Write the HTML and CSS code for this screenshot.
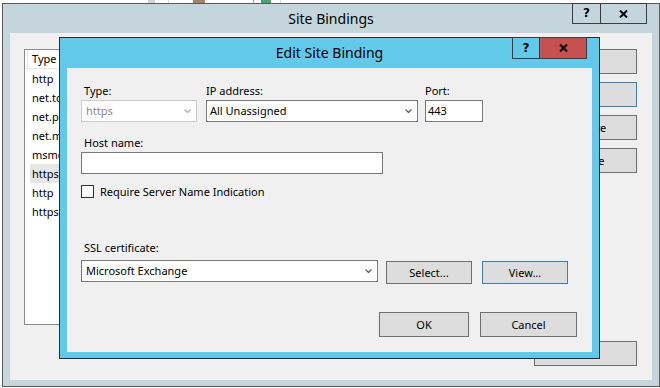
FILE: index.html
```html
<!DOCTYPE html>
<html lang="en">
<head>
    <meta charset="UTF-8">
    <title>Edit Site Binding</title>
    <link rel="stylesheet" href="styles.css">
</head>
<body>
    <div class="desktop">
        <!-- bits of whatever sits behind the windows -->
        <div class="desk-strip">
            <span class="bit bit-gray"></span>
            <span class="bit bit-line"></span>
            <span class="bit bit-photo"></span>
            <span class="bit bit-line dark"></span>
            <span class="bit bit-icon"></span>
            <span class="bit bit-line"></span>
        </div>

        <div class="window bindings">
            <div class="titlebar">
                Site Bindings
                <div class="caption-btns">
                    <span class="cap cap-help">?</span>
                    <span class="cap cap-close">
                        <svg width="9" height="8" viewBox="0 0 9 8"><path d="M1 0.5 L8 7.5 M8 0.5 L1 7.5" stroke="#000" stroke-width="2"/></svg>
                    </span>
                </div>
            </div>
            <div class="client bindings-client">
                <div class="list">
                    <div class="list-head">Type</div>
                    <div class="list-row">http</div>
                    <div class="list-row">net.tcp</div>
                    <div class="list-row">net.pipe</div>
                    <div class="list-row">net.msmq</div>
                    <div class="list-row">msmq.formatname</div>
                    <div class="list-row selected">https</div>
                    <div class="list-row">http</div>
                    <div class="list-row">https</div>
                </div>
                <div class="side-btns">
                    <button class="btn side">Add...</button>
                    <button class="btn side focused">Edit...</button>
                    <button class="btn side">Remove</button>
                    <button class="btn side">Browse</button>
                    <button class="btn side close">Close</button>
                </div>
            </div>
        </div>

        <div class="window edit-dialog">
            <div class="titlebar">
                Edit Site Binding
                <div class="caption-btns">
                    <span class="cap cap-help">?</span>
                    <span class="cap cap-close red">
                        <svg width="9" height="8" viewBox="0 0 9 8"><path d="M1 0.5 L8 7.5 M8 0.5 L1 7.5" stroke="#000" stroke-width="2"/></svg>
                    </span>
                </div>
            </div>
            <div class="client edit-client">
                <div class="row-top">
                    <div class="field type-field">
                        <div class="lbl indent">Type:</div>
                        <div class="combo disabled">
                            <span>https</span>
                            <svg width="7" height="4" viewBox="0 0 7 4"><path d="M0.5 0.5 L3.5 3.5 L6.5 0.5" fill="none" stroke="#b0b0b0" stroke-width="1.3"/></svg>
                        </div>
                    </div>
                    <div class="field ip-field">
                        <div class="lbl">IP address:</div>
                        <div class="combo">
                            <span>All Unassigned</span>
                            <svg width="7" height="4" viewBox="0 0 7 4"><path d="M0.5 0.5 L3.5 3.5 L6.5 0.5" fill="none" stroke="#606060" stroke-width="1.3"/></svg>
                        </div>
                    </div>
                    <div class="field port-field">
                        <div class="lbl">Port:</div>
                        <div class="textbox">443</div>
                    </div>
                </div>

                <div class="lbl indent host-lbl">Host name:</div>
                <div class="textbox host-box"></div>

                <div class="check-row">
                    <span class="check"></span>
                    <span>Require Server Name Indication</span>
                </div>

                <div class="lbl indent ssl-lbl">SSL certificate:</div>
                <div class="ssl-row">
                    <div class="combo ssl-combo">
                        <span>Microsoft Exchange</span>
                        <svg width="7" height="4" viewBox="0 0 7 4"><path d="M0.5 0.5 L3.5 3.5 L6.5 0.5" fill="none" stroke="#606060" stroke-width="1.3"/></svg>
                    </div>
                    <button class="btn cert-btn">Select...</button>
                    <button class="btn cert-btn focused view-btn">View...</button>
                </div>

                <div class="action-row">
                    <button class="btn ok-btn">OK</button>
                    <button class="btn cancel-btn">Cancel</button>
                </div>
            </div>
        </div>
    </div>
</body>
</html>
```

FILE: styles.css
```css
body {
    margin: 0;
    background-color: #ffffff;
    font-family: 'Noto Sans', 'Open Sans', sans-serif;
    font-size: 11px;
    line-height: 15px;
    color: #000;
}

.desktop {
    position: relative;
    width: 660px;
    height: 388px;
    overflow: hidden;
}

/* tiny strip of desktop showing above the back window */
.desk-strip {
    display: flex;
    height: 3px;
    padding-left: 148px;
}

.bit {
    height: 3px;
}

.bit-gray {
    width: 7px;
    background-color: #d4d4d4;
    margin-right: 13px;
}

.bit-line {
    width: 1px;
    background-color: #dcdcdc;
    margin-right: 24px;
}

.bit-line.dark {
    background-color: #9a9a9a;
    margin-right: 7px;
}

.bit-photo {
    width: 12px;
    background-color: #a58466;
    margin-right: 48px;
}

.bit-icon {
    width: 10px;
    background-color: #4aa36a;
    margin-right: 9px;
}

/* windows */
.window {
    position: absolute;
    display: flex;
    flex-direction: column;
    box-sizing: border-box;
}

.titlebar {
    position: relative;
    text-align: center;
    font-size: 14px;
}

.caption-btns {
    position: absolute;
    top: -1px;
    right: 5px;
    display: flex;
}

.cap {
    display: flex;
    align-items: center;
    justify-content: center;
    box-sizing: border-box;
    border: 1px solid #3c3c3c;
    font-family: 'DejaVu Sans', sans-serif;
    font-weight: bold;
    font-size: 12px;
}

.cap-close {
    border-left: none;
}

.cap-close.red {
    background-color: #c75050;
}

.client {
    flex: 1;
    background-color: #f0f0f0;
}

/* Site Bindings (back window) */
.bindings {
    left: 2px;
    top: 3px;
    width: 658px;
    height: 384px;
    border: 1px solid #5a5a5a;
    background-color: #c4d6db;
    padding: 0 7px 6px 7px;
}

.bindings .titlebar {
    height: 29px;
    line-height: 29px;
}

.bindings .cap {
    height: 21px;
}

.bindings .cap-help {
    width: 29px;
}

.bindings .cap-close {
    width: 46px;
}

.bindings-client {
    display: flex;
    gap: 14px;
    padding: 16px 15px 14px 14px;
}

.list {
    width: 496px;
    height: 276px;
    box-sizing: border-box;
    border: 1px solid #8c8c8c;
    background-color: #fff;
}

.list-head {
    height: 19px;
    box-sizing: border-box;
    margin-left: 2px;
    padding-left: 4px;
    border: 1px solid #e5e5e5;
    border-top: none;
    line-height: 18px;
}

.list-row {
    height: 19px;
    line-height: 19px;
    margin-left: 5px;
    padding-left: 2px;
}

.list-row.selected {
    background-color: #e6e6e6;
}

.side-btns {
    display: flex;
    flex-direction: column;
    gap: 8px;
}

.btn {
    box-sizing: border-box;
    border: 1px solid #707070;
    background-color: #dddddd;
    font-family: 'Noto Sans', 'Open Sans', sans-serif;
    font-size: 11px;
    color: #000;
    padding: 0;
}

.btn.focused {
    border-color: #3c7fb1;
}

.btn.side {
    width: 103px;
    height: 25px;
}

.btn.side.close {
    margin-top: auto;
}

/* Edit Site Binding dialog */
.edit-dialog {
    left: 59px;
    top: 37px;
    width: 541px;
    height: 322px;
    border: 1px solid #2b2b2b;
    background-color: #63c9ea;
    padding: 0 7px 6px 7px;
}

.edit-dialog .titlebar {
    height: 30px;
    line-height: 30px;
}

.edit-dialog .cap {
    height: 22px;
}

.edit-dialog .cap-help {
    width: 28px;
}

.edit-dialog .cap-close {
    width: 47px;
}

.edit-client {
    padding: 15px 15px 0 14px;
}

.lbl {
    height: 15px;
}

.lbl.indent {
    padding-left: 3px;
}

.row-top {
    display: flex;
}

.field .lbl {
    margin-bottom: 2px;
}

.type-field {
    width: 116px;
    margin-right: 9px;
}

.ip-field {
    width: 212px;
    margin-right: 7px;
}

.port-field {
    width: 58px;
}

.combo,
.textbox {
    box-sizing: border-box;
    height: 22px;
    border: 1px solid #7a7a7a;
    background-color: #fff;
    line-height: 20px;
}

.combo {
    display: flex;
    align-items: center;
    justify-content: space-between;
    padding: 0 5px 0 3px;
}

.combo.disabled {
    border-color: #cccccc;
    color: #8a8a8a;
    padding-left: 4px;
}

.textbox {
    padding-left: 2px;
}

.host-lbl {
    margin-top: 13px;
    margin-bottom: 2px;
}

.host-box {
    width: 302px;
}

.check-row {
    display: flex;
    align-items: center;
    gap: 6px;
    height: 15px;
    margin-top: 10px;
}

.check {
    width: 13px;
    height: 13px;
    box-sizing: border-box;
    border: 1px solid #333333;
    background-color: #fff;
}

.ssl-lbl {
    margin-top: 41px;
    margin-bottom: 5px;
}

.ssl-row {
    display: flex;
    align-items: flex-start;
}

.ssl-combo {
    width: 297px;
    padding-left: 4px;
}

.cert-btn {
    width: 86px;
    height: 23px;
    margin-top: 1px;
    margin-left: 8px;
}

.view-btn {
    margin-left: 10px;
}

.action-row {
    display: flex;
    justify-content: flex-end;
    gap: 11px;
    margin-top: 28px;
}

.ok-btn {
    width: 90px;
    height: 25px;
}

.cancel-btn {
    width: 97px;
    height: 25px;
}
```
